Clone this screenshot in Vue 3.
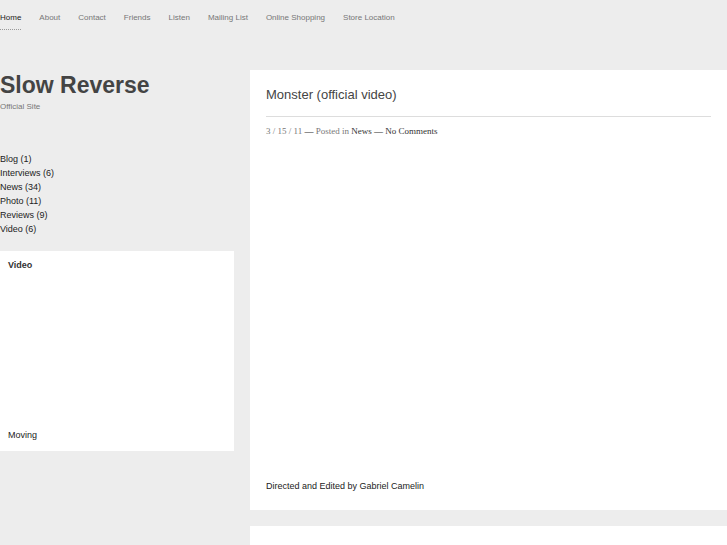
<script setup>
const links = ['Home', 'About', 'Contact', 'Friends', 'Listen', 'Mailing List', 'Online Shopping', 'Store Location']
const categories = [
  { name: 'Blog', count: 1 },
  { name: 'Interviews', count: 6 },
  { name: 'News', count: 34 },
  { name: 'Photo', count: 11 },
  { name: 'Reviews', count: 9 },
  { name: 'Video', count: 6 },
]
</script>

<template>
  <div class="page">
    <nav class="nav" aria-label="Main">
      <a v-for="(link, i) in links" :key="link" href="#" :class="{ current: i === 0 }">{{ link }}</a>
    </nav>
    <div class="columns">
      <aside class="sidebar">
        <header class="brand">
          <h1><a href="#">Slow Reverse</a></h1>
          <p>Official Site</p>
        </header>
        <ul class="categories">
          <li v-for="c in categories" :key="c.name"><a href="#">{{ c.name }}</a> ({{ c.count }})</li>
        </ul>
        <section class="widget">
          <h2>Video</h2>
          <div class="clip"></div>
          <p>Moving</p>
        </section>
      </aside>
      <main class="posts">
        <article class="post">
          <h2><a href="#">Monster (official video)</a></h2>
          <p class="meta">3 / 15 / 11 <b>—</b> Posted in <a href="#">News</a> <b>—</b> <a href="#">No Comments</a></p>
          <div class="film"></div>
          <p class="credit">Directed and Edited by Gabriel Camelin</p>
        </article>
        <article class="post"></article>
      </main>
    </div>
  </div>
</template>

<style>
html {
  background: #ededed;
}
body {
  margin: 0;
}
</style>

<style scoped>
.page {
  height: 100vh;
  overflow: hidden;
  color: #222;
  font: 9px/14px "Liberation Sans", Arial, sans-serif;
}
a {
  color: inherit;
  text-decoration: none;
}
h1, h2, p, ul {
  margin: 0;
  padding: 0;
}
.nav {
  display: flex;
  gap: 18px;
  padding-top: 12px;
  color: #777;
  font-size: 8px;
  line-height: 12px;
  white-space: nowrap;
}
.nav a {
  padding-bottom: 5px;
  border-bottom: 1px dotted transparent;
}
.nav .current {
  color: #222;
  border-color: #999;
}
.columns {
  display: grid;
  grid-template-columns: 234px minmax(0, 1fr);
  gap: 16px;
  padding-top: 40px;
}
.brand h1 {
  color: #444;
  font-size: 23px;
  line-height: 30px;
}
.brand p {
  color: #777;
  font-size: 8px;
  line-height: 14px;
}
.categories {
  padding: 38px 0 15px;
  list-style: none;
}
.widget {
  padding: 7px 8px 9px;
  background: #fff;
}
.widget h2 {
  color: #333;
  font-size: 9px;
  line-height: 14px;
}
.clip {
  height: 156px;
}
.posts {
  display: grid;
  gap: 16px;
}
.post {
  min-height: 20px;
  padding: 16px 16px 17px;
  background: #fff;
}
.post h2 {
  padding-bottom: 12px;
  border-bottom: 1px solid #ddd;
  color: #444;
  font-size: 13px;
  font-weight: 400;
  line-height: 18px;
}
.meta {
  padding-top: 7px;
  color: #777;
  font-family: "Liberation Serif", "Times New Roman", serif;
}
.meta a, .meta b {
  color: #333;
  font-weight: 400;
}
.film {
  height: 341px;
}
</style>
